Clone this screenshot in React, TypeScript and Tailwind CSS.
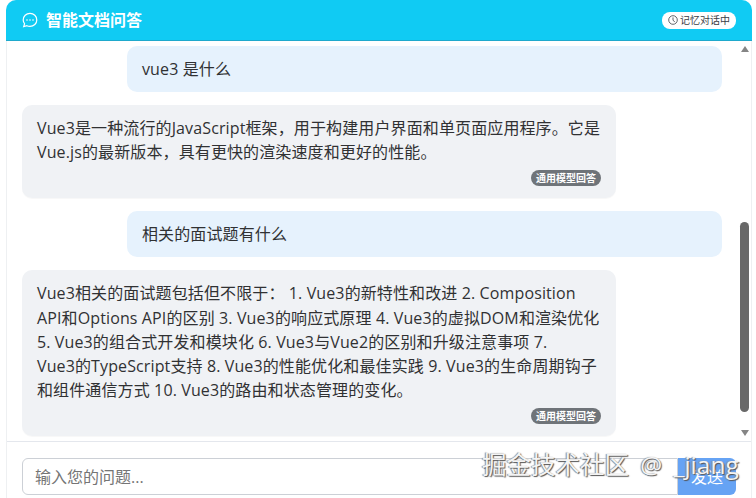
const font = { fontFamily: '"Open Sans", "Noto Sans CJK SC", sans-serif' };

function UserBubble({ text }: { text: string }) {
  return (
    <div className="ml-[105px] w-[595px] h-[46px] rounded-[10px] bg-[#e6f2fd] px-[15px] py-[11px] text-[16px] leading-[24px] tracking-[0.12px] text-[#303133]">
      {text}
    </div>
  );
}

function AiBubble({ lines }: { lines: string[] }) {
  return (
    <div className="w-[594px] rounded-[10px] bg-[#f0f2f5] px-[15px] pt-[11px] pb-[12px] text-[16px] leading-[24.2px] tracking-[0.12px] text-[#303133] shadow-[0_1px_1px_rgba(0,0,0,0.03)]">
      {lines.map((line) => (
        <div key={line} className="whitespace-pre">
          {line}
        </div>
      ))}
      <div className="mt-[6px] flex justify-end">
        <span className="h-[16px] w-[70px] rounded-[8px] bg-[#6f7479] text-center text-[10px] leading-[16px] font-bold tracking-normal text-white">
          通用模型回答
        </span>
      </div>
    </div>
  );
}

export default function App() {
  return (
    <div className="relative h-[498px] w-[756px] overflow-hidden bg-white" style={font}>
      <div className="ml-[6px] flex h-[520px] w-[746px] flex-col rounded-t-[10px] border-x border-[#eef0f2] bg-white">
        <header className="-mx-px flex h-[41px] shrink-0 items-center justify-between rounded-t-[10px] border-b border-[#1fa9cc] bg-[#10cbf3] pl-[16px] pr-[16px] text-white">
          <div className="flex items-center gap-[8px]">
            <svg width="16" height="16" viewBox="0 0 16 16" fill="none" stroke="currentColor" strokeWidth="1.2">
              <path d="M8 1.4c3.8 0 6.8 2.9 6.8 6.5S11.800 14.400 8 14.400c-1.100 0-2.200-.2-3.100-.7l-3.200.9.9-2.800C1.900 10.700 1.200 9.400 1.200 7.900 1.200 4.300 4.200 1.400 8 1.400z" />
              <circle cx="5" cy="8" r=".8" fill="currentColor" stroke="none" />
              <circle cx="8" cy="8" r=".8" fill="currentColor" stroke="none" />
              <circle cx="11" cy="8" r=".8" fill="currentColor" stroke="none" />
            </svg>
            <span className="text-[16px] leading-[24px] font-bold">智能文档问答</span>
          </div>
          <div className="flex h-[17px] w-[74px] items-center justify-center gap-[2px] rounded-[8px] bg-white text-[10px] text-[#3b4046]">
            <svg width="10" height="10" viewBox="0 0 10 10" fill="none" stroke="currentColor" strokeWidth="0.8">
              <circle cx="5" cy="5" r="4.300" />
              <path d="M5 2.400V5.300l1.800 1.500" />
            </svg>
            <span>记忆对话中</span>
          </div>
        </header>

        <div className="flex h-[400px] shrink-0">
          <div className="flex w-[733px] flex-col gap-[13px] pl-[15px] pt-[5px]">
            <UserBubble text="vue3 是什么" />
            <AiBubble
              lines={[
                "Vue3是一种流行的JavaScript框架，用于构建用户界面和单页面应用程序。它是",
                "Vue.js的最新版本，具有更快的渲染速度和更好的性能。",
              ]}
            />
            <UserBubble text="相关的面试题有什么" />
            <AiBubble
              lines={[
                "Vue3相关的面试题包括但不限于： 1. Vue3的新特性和改进 2. Composition",
                "API和Options API的区别 3. Vue3的响应式原理 4. Vue3的虚拟DOM和渲染优化",
                "5. Vue3的组合式开发和模块化 6. Vue3与Vue2的区别和升级注意事项 7.",
                "Vue3的TypeScript支持 8. Vue3的性能优化和最佳实践 9. Vue3的生命周期钩子",
                "和组件通信方式 10. Vue3的路由和状态管理的变化。",
              ]}
            />
          </div>
          <div className="flex w-[13px] flex-col items-center pt-[5px]">
            <div className="h-0 w-0 border-x-[4.500px] border-b-[6px] border-x-transparent border-b-[#858585]" />
            <div className="mt-[170px] h-[190px] w-[9px] rounded-[5px] bg-[#686868]" />
            <div className="mt-[18px] h-0 w-0 border-x-[4.500px] border-t-[6px] border-x-transparent border-t-[#858585]" />
          </div>
        </div>

        <div className="flex flex-1 border-t border-[#e4e7ed] pl-[15px] pt-[16px]">
          <div className="flex h-[37px] w-[656px] items-center rounded-l-[6px] border border-[#ccd0d6] bg-white pl-[12px] text-[16px] text-[#757575]">
            输入您的问题...
          </div>
          <div className="flex h-[37px] w-[58px] items-center justify-center rounded-r-[6px] bg-[#66a3f4] text-[16px] text-white">
            发送
          </div>
        </div>
      </div>
      <div className="absolute left-[482px] top-[450px] text-[24.500px] leading-[30px] whitespace-nowrap text-[#f4f4f4] [text-shadow:1px_1px_1px_#555,-1px_0_1px_#888] [word-spacing:5px]">
        掘金技术社区 @ _jiang
      </div>
    </div>
  );
}
